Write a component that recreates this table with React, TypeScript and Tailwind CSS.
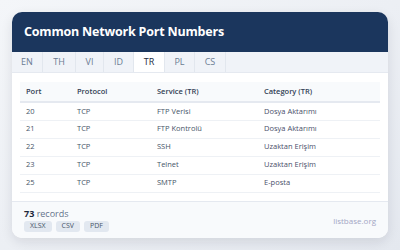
const rows = [
  { port: "20", protocol: "TCP", service: "FTP Verisi", category: "Dosya Aktarımı" },
  { port: "21", protocol: "TCP", service: "FTP Kontrolü", category: "Dosya Aktarımı" },
  { port: "22", protocol: "TCP", service: "SSH", category: "Uzaktan Erişim" },
  { port: "23", protocol: "TCP", service: "Telnet", category: "Uzaktan Erişim" },
  { port: "25", protocol: "TCP", service: "SMTP", category: "E-posta" },
];

const tabs = [
  { label: "EN", w: "w-[31px]" },
  { label: "TH", w: "w-[33px]" },
  { label: "VI", w: "w-[28px]" },
  { label: "ID", w: "w-[30px]" },
  { label: "TR", w: "w-[31px]" },
  { label: "PL", w: "w-[30px]" },
  { label: "CS", w: "w-[31px]" },
];

export default function App() {
  return (
    <div className="w-[400px] h-[250px] bg-gradient-to-br from-[#f4f6f9] to-[#e4e8ef] pt-3 px-3 font-['Open_Sans',sans-serif]">
      <div className="w-[376px] h-[226px] bg-white rounded-[10px] overflow-hidden shadow-[0_4px_12px_rgba(15,23,42,0.10)] flex flex-col">
        <div className="h-10 bg-[#1b365d] flex items-center px-3">
          <h1 className="text-white font-bold text-[12.5px] tracking-[-0.2px]">Common Network Port Numbers</h1>
        </div>
        <div className="h-[21px] bg-[#f0f3f8] flex border-b border-[#e5e9f0]">
          {tabs.map((t) => (
            <div
              key={t.label}
              className={`${t.w} flex items-center justify-center text-[9px] border-r border-[#e2e7ee] ${
                t.label === "TR" ? "bg-white text-[#1e293b]" : "text-[#6b7c93]"
              }`}
            >
              {t.label}
            </div>
          ))}
        </div>
        <div className="px-2 pt-[9px] pb-2 border-b border-[#e5e9f0]">
          <table className="w-full text-[7.5px] text-[#475569] border-collapse">
            <thead>
              <tr className="h-5 bg-[#f8fafc] border-b-2 border-[#e5e9f0] text-[#334155] text-left">
                <th className="pl-[6px] w-[57px] font-semibold">Port</th>
                <th className="w-[80px] font-semibold">Protocol</th>
                <th className="w-[107px] font-semibold">Service (TR)</th>
                <th className="font-semibold">Category (TR)</th>
              </tr>
            </thead>
            <tbody>
              {rows.map((r) => (
                <tr key={r.port} className="h-[18px] border-b border-[#eef1f5]">
                  <td className="pl-[6px]">{r.port}</td>
                  <td>{r.protocol}</td>
                  <td>{r.service}</td>
                  <td className="text-[#4a4f6a]">{r.category}</td>
                </tr>
              ))}
            </tbody>
          </table>
        </div>
        <div className="flex-1 bg-[#f8fafc] px-3 pt-[5px] flex justify-between">
          <div className="flex flex-col gap-[1px]">
            <div className="text-[9px] text-[#64748b] leading-[13px]">
              <span className="font-bold text-[#1e293b]">73</span> records
            </div>
            <div className="flex gap-1">
              {["XLSX", "CSV", "PDF"].map((b) => (
                <span key={b} className="h-[11px] px-[6px] rounded-[3px] bg-[#e2e8f0] text-[#475569] text-[7px] flex items-center">
                  {b}
                </span>
              ))}
            </div>
          </div>
          <div className="self-end mb-[11px] text-[8px] text-[#a3a6c4]">listbase.org</div>
        </div>
      </div>
    </div>
  );
}
